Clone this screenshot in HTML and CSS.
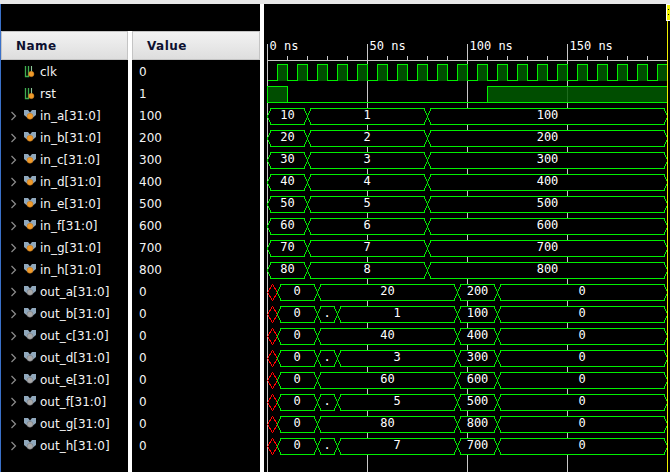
FILE: index.html
```html
<!DOCTYPE html>
<html lang="en">
<head>
<meta charset="utf-8">
<title>Waveform</title>
<link rel="stylesheet" href="styles.css">
</head>
<body>
<svg class="defs" width="0" height="0" aria-hidden="true">
  <defs>
    <symbol id="i-bit" viewBox="0 0 14 14">
      <path class="ib-g" d="M2.5 1V11.5H5.5V1"/>
      <path class="ib-l" d="M8.5 1V7"/>
      <circle class="dot-o" cx="8.3" cy="9" r="2.7"/>
    </symbol>
    <symbol id="i-in" viewBox="0 0 14 14">
      <path class="ib-b" d="M1 1H5L7 3.5L9 1H13V6L9.5 9H4.5L1 6Z"/>
      <circle class="dot-o" cx="7" cy="7.3" r="3"/>
    </symbol>
    <symbol id="i-out" viewBox="0 0 14 14">
      <path class="ib-b" d="M1 1H5L7 3.5L9 1H13V6L9.5 9H4.5L1 6Z"/>
      <circle class="dot-g" cx="7" cy="7.3" r="3"/>
    </symbol>
    <symbol id="i-chev" viewBox="0 0 8 10">
      <path class="chev" d="M1.5 1L5.5 5L1.5 9"/>
    </symbol>
  </defs>
</svg>
<main class="app">
  <section class="names">
    <div class="band"></div>
    <div class="table">
      <div class="head"><div class="hcell hname">Name</div><div class="hcell hvalue">Value</div></div>
      <div class="cols">
        <ul class="col col-name">
          <li class="row"><span class="ind"></span><svg class="ic"><use href="#i-bit"/></svg><span>clk</span></li>
          <li class="row"><span class="ind"></span><svg class="ic"><use href="#i-bit"/></svg><span>rst</span></li>
          <li class="row"><svg class="ch"><use href="#i-chev"/></svg><svg class="ic"><use href="#i-in"/></svg><span>in_a[31:0]</span></li>
          <li class="row"><svg class="ch"><use href="#i-chev"/></svg><svg class="ic"><use href="#i-in"/></svg><span>in_b[31:0]</span></li>
          <li class="row"><svg class="ch"><use href="#i-chev"/></svg><svg class="ic"><use href="#i-in"/></svg><span>in_c[31:0]</span></li>
          <li class="row"><svg class="ch"><use href="#i-chev"/></svg><svg class="ic"><use href="#i-in"/></svg><span>in_d[31:0]</span></li>
          <li class="row"><svg class="ch"><use href="#i-chev"/></svg><svg class="ic"><use href="#i-in"/></svg><span>in_e[31:0]</span></li>
          <li class="row"><svg class="ch"><use href="#i-chev"/></svg><svg class="ic"><use href="#i-in"/></svg><span>in_f[31:0]</span></li>
          <li class="row"><svg class="ch"><use href="#i-chev"/></svg><svg class="ic"><use href="#i-in"/></svg><span>in_g[31:0]</span></li>
          <li class="row"><svg class="ch"><use href="#i-chev"/></svg><svg class="ic"><use href="#i-in"/></svg><span>in_h[31:0]</span></li>
          <li class="row"><svg class="ch"><use href="#i-chev"/></svg><svg class="ic"><use href="#i-out"/></svg><span>out_a[31:0]</span></li>
          <li class="row"><svg class="ch"><use href="#i-chev"/></svg><svg class="ic"><use href="#i-out"/></svg><span>out_b[31:0]</span></li>
          <li class="row"><svg class="ch"><use href="#i-chev"/></svg><svg class="ic"><use href="#i-out"/></svg><span>out_c[31:0]</span></li>
          <li class="row"><svg class="ch"><use href="#i-chev"/></svg><svg class="ic"><use href="#i-out"/></svg><span>out_d[31:0]</span></li>
          <li class="row"><svg class="ch"><use href="#i-chev"/></svg><svg class="ic"><use href="#i-out"/></svg><span>out_e[31:0]</span></li>
          <li class="row"><svg class="ch"><use href="#i-chev"/></svg><svg class="ic"><use href="#i-out"/></svg><span>out_f[31:0]</span></li>
          <li class="row"><svg class="ch"><use href="#i-chev"/></svg><svg class="ic"><use href="#i-out"/></svg><span>out_g[31:0]</span></li>
          <li class="row"><svg class="ch"><use href="#i-chev"/></svg><svg class="ic"><use href="#i-out"/></svg><span>out_h[31:0]</span></li>
        </ul>
        <ul class="col col-value">
          <li class="vrow">0</li><li class="vrow">1</li><li class="vrow">100</li><li class="vrow">200</li>
          <li class="vrow">300</li><li class="vrow">400</li><li class="vrow">500</li><li class="vrow">600</li>
          <li class="vrow">700</li><li class="vrow">800</li><li class="vrow">0</li><li class="vrow">0</li>
          <li class="vrow">0</li><li class="vrow">0</li><li class="vrow">0</li><li class="vrow">0</li>
          <li class="vrow">0</li><li class="vrow">0</li>
        </ul>
      </div>
    </div>
  </section>
  <section class="waves">
    <svg class="canvas" width="406" height="468" viewBox="264 4 406 468">
      <defs>
        <g id="w-in">
          <path class="bus" d="M267.5 8L271 0H304L307.5 8L304 16H271Z"/>
          <path class="bus" d="M307.5 8L311 0H424L427.5 8L424 16H311Z"/>
          <path class="bus" d="M427.5 8L431 0H664L667.5 8L664 16H431Z"/>
        </g>
        <g id="w-x">
          <path class="unk" d="M267.5 8L272.5 0L277.5 8L272.5 16Z"/>
          <path class="bus" d="M277.5 8L281 0H314L317.5 8L314 16H281Z"/>
          <path class="bus" d="M457.5 8L461 0H494L497.5 8L494 16H461Z"/>
          <path class="bus" d="M497.5 8L501 0H664L667.5 8L664 16H501Z"/>
        </g>
        <g id="w-a">
          <use href="#w-x"/>
          <path class="bus" d="M317.5 8L321 0H454L457.5 8L454 16H321Z"/>
        </g>
        <g id="w-b">
          <use href="#w-x"/>
          <path class="bus" d="M317.5 8L321 0H334L337.5 8L334 16H321Z"/>
          <path class="bus" d="M337.5 8L341 0H454L457.5 8L454 16H341Z"/>
        </g>
      </defs>

      <g class="grid">
        <path d="M267.5 44V472M367.5 44V472M467.5 44V472M567.5 44V472"/>
        <path d="M267 60.5H667"/>
        <path d="M287.5 56V60M307.5 56V60M327.5 56V60M347.5 56V60M387.5 56V60M407.5 56V60M427.5 56V60M447.5 56V60M487.5 56V60M507.5 56V60M527.5 56V60M547.5 56V60M587.5 56V60M607.5 56V60M627.5 56V60M647.5 56V60"/>
      </g>
      <g class="ruler">
        <text x="269.5" y="50">0 ns</text>
        <text x="369.5" y="50">50 ns</text>
        <text x="469.5" y="50">100 ns</text>
        <text x="569.5" y="50">150 ns</text>
      </g>

      <path class="bit" d="M267.5 80.5h10v-16h10v16h10v-16h10v16h10v-16h10v16h10v-16h10v16h10v-16h10v16h10v-16h10v16h10v-16h10v16h10v-16h10v16h10v-16h10v16h10v-16h10v16h10v-16h10v16h10v-16h10v16h10v-16h10v16h10v-16h10v16h10v-16h10v16h10v-16h10v16h10v-16h10v16h10v-16h10v16h10v-16h10v16h10v-16h10v16"/>
      <path class="bit" d="M267.5 102.5V86.5H287.5V102.5H487.5V86.5H667.5V102.5Z"/>

      <use href="#w-in" y="108.5"/><use href="#w-in" y="130.5"/><use href="#w-in" y="152.5"/><use href="#w-in" y="174.5"/>
      <use href="#w-in" y="196.5"/><use href="#w-in" y="218.5"/><use href="#w-in" y="240.5"/><use href="#w-in" y="262.5"/>
      <use href="#w-a" y="284.5"/><use href="#w-b" y="306.5"/><use href="#w-a" y="328.5"/><use href="#w-b" y="350.5"/>
      <use href="#w-a" y="372.5"/><use href="#w-b" y="394.5"/><use href="#w-a" y="416.5"/><use href="#w-b" y="438.5"/>

      <g class="vals">
        <text x="287.5" y="119">10</text><text x="367" y="119">1</text><text x="547.5" y="119">100</text>
        <text x="287.5" y="141">20</text><text x="367" y="141">2</text><text x="547.5" y="141">200</text>
        <text x="287.5" y="163">30</text><text x="367" y="163">3</text><text x="547.5" y="163">300</text>
        <text x="287.5" y="185">40</text><text x="367" y="185">4</text><text x="547.5" y="185">400</text>
        <text x="287.5" y="207">50</text><text x="367" y="207">5</text><text x="547.5" y="207">500</text>
        <text x="287.5" y="229">60</text><text x="367" y="229">6</text><text x="547.5" y="229">600</text>
        <text x="287.5" y="251">70</text><text x="367" y="251">7</text><text x="547.5" y="251">700</text>
        <text x="287.5" y="273">80</text><text x="367" y="273">8</text><text x="547.5" y="273">800</text>

        <text x="297" y="295">0</text><text x="387.5" y="295">20</text><text x="477.5" y="295">200</text><text x="582" y="295">0</text>
        <text x="297" y="317">0</text><text x="327" y="317">.</text><text x="397" y="317">1</text><text x="477.5" y="317">100</text><text x="582" y="317">0</text>
        <text x="297" y="339">0</text><text x="387.5" y="339">40</text><text x="477.5" y="339">400</text><text x="582" y="339">0</text>
        <text x="297" y="361">0</text><text x="327" y="361">.</text><text x="397" y="361">3</text><text x="477.5" y="361">300</text><text x="582" y="361">0</text>
        <text x="297" y="383">0</text><text x="387.5" y="383">60</text><text x="477.5" y="383">600</text><text x="582" y="383">0</text>
        <text x="297" y="405">0</text><text x="327" y="405">.</text><text x="397" y="405">5</text><text x="477.5" y="405">500</text><text x="582" y="405">0</text>
        <text x="297" y="427">0</text><text x="387.5" y="427">80</text><text x="477.5" y="427">800</text><text x="582" y="427">0</text>
        <text x="297" y="449">0</text><text x="327" y="449">.</text><text x="397" y="449">7</text><text x="477.5" y="449">700</text><text x="582" y="449">0</text>
      </g>

      <path class="cursor" d="M667.5 20V472"/>
      <rect class="flag-edge" x="666" y="4" width="4" height="17"/>
      <rect class="flag" x="667" y="5" width="3" height="15"/>
      <path class="flag-dots" d="M668 9h1v1h-1zM668 14h1v1h-1z"/>
    </svg>
  </section>
</main>
</body>
</html>
```

FILE: styles.css
```css
* { box-sizing: border-box; }
html, body { margin: 0; padding: 0; }
body { width: 670px; height: 472px; overflow: hidden; background: #fff; }
ul { list-style: none; margin: 0; padding: 0; }
.defs { position: absolute; }

.app { display: flex; gap: 4px; height: 472px; padding-top: 4px; background: linear-gradient(#e8e8e8 0 4px, #fff 4px); }

.names { width: 260px; display: flex; flex-direction: column; background: #000; border-left: 1px solid #3a70c8; font-family: "DejaVu Sans", sans-serif; }
.band { height: 27px; flex: none; }
.table { flex: 1; display: flex; flex-direction: column; }
.head { display: flex; gap: 4px; height: 29px; flex: none; background: #fff; }
.hcell { flex: 1; display: flex; align-items: center; background: linear-gradient(#f2f2f2, #dedede); border: 1px solid #c4c4c4; font-size: 12px; font-weight: 700; letter-spacing: .45px; color: #0d1030; }
.hname { flex: none; width: 127px; padding-left: 14px; }
.hvalue { padding-left: 14px; }

.cols { flex: 1; display: flex; gap: 4px; background: #fff; }
.col { background: #000; color: #f4f4f4; font-size: 12px; }
.col-name { width: 127px; flex: none; }
.col-value { flex: 1; padding-left: 7px; }
.row, .vrow { height: 22px; display: flex; align-items: center; white-space: nowrap; padding-top: 1px; }
.row { padding-left: 9px; }
.ind, .ch { width: 8px; height: 10px; flex: none; margin-right: 5px; }
.ic { width: 14px; height: 14px; flex: none; margin-right: 3px; }

.ib-g { fill: none; stroke: #3fae4f; stroke-width: 1.3; }
.ib-l { fill: none; stroke: #8fc89a; stroke-width: 1.1; }
.ib-b { fill: #90a8bc; }
.dot-o { fill: #f09a2a; stroke: #b87018; stroke-width: .5; }
.dot-g { fill: #a8a8a8; stroke: #6c7078; stroke-width: .5; }
.chev { fill: none; stroke: #8c8c8c; stroke-width: 1.2; }

.waves { flex: 1; background: #000; overflow: hidden; }
.canvas { display: block; shape-rendering: crispEdges; }
.grid path { fill: none; stroke: #c8c8c8; stroke-width: 1; }
.ruler text { font: 12px "DejaVu Sans Mono", monospace; fill: #fff; }
.vals text { font: 12px "DejaVu Sans Mono", monospace; fill: #fff; text-anchor: middle; }
.bit { fill: rgba(0, 90, 0, .85); stroke: #00f000; stroke-width: 1; }
.bus { fill: #000; stroke: #00f000; stroke-width: 1; }
.unk { fill: #000; stroke: #ff0000; stroke-width: 1; }
.cursor { stroke: #f0f000; stroke-width: 1; fill: none; }
.flag { fill: #f4f400; }
.flag-edge { fill: #fff; }
.flag-dots { fill: #000; }
```
